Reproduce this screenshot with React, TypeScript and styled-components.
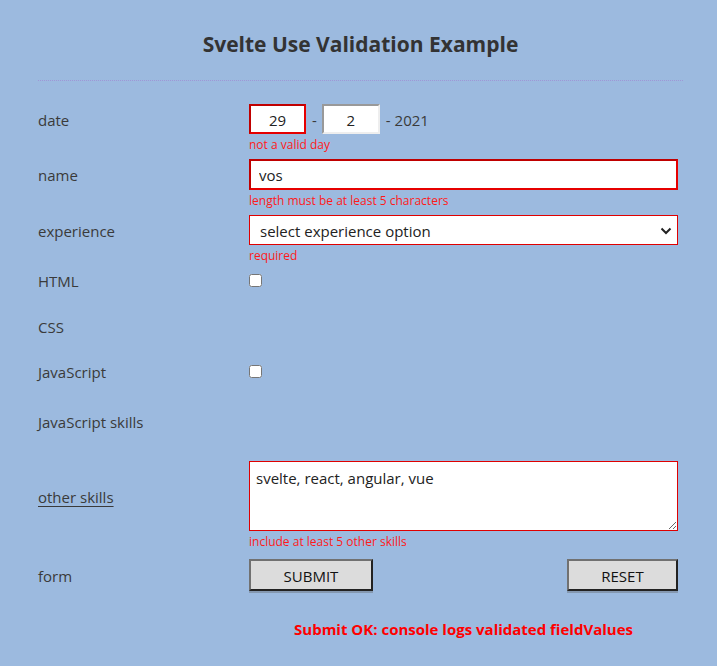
import React, { useState } from 'react';
import styled, { createGlobalStyle } from 'styled-components';

const GlobalStyle = createGlobalStyle`
  html, body {
    margin: 0;
    padding: 0;
    background: #9cbadf;
  }
  body {
    font-family: "Open Sans", "Noto Sans", sans-serif;
    color: #3a3a3a;
  }
`;

const Page = styled.div`
  width: 645px;
  padding: 0 0 20px 38px;
`;

const Title = styled.h1`
  margin: 0;
  padding-top: 30px;
  height: 28px;
  line-height: 28px;
  text-align: center;
  font-size: 21px;
  font-weight: 700;
  color: #333;
`;

const Divider = styled.hr`
  margin: 22px 0 0 0;
  border: none;
  border-top: 1px dotted #9f96d6;
  height: 0;
`;

const Form = styled.form`
  display: flex;
  flex-direction: column;
`;

const Field = styled.div<{ $mt: number; $h?: number }>`
  display: grid;
  grid-template-columns: 211px 429px;
  grid-template-rows: ${p => (p.$h ? `${p.$h}px` : 'auto')} auto;
  margin-top: ${p => p.$mt}px;
`;

const Label = styled.label<{ $underline?: boolean }>`
  grid-column: 1;
  grid-row: 1;
  align-self: center;
  padding-top: 1px;
  font-size: 15px;
  text-decoration: ${p => (p.$underline ? 'underline' : 'none')};
  text-underline-offset: 3px;
`;

const Control = styled.div`
  grid-column: 2;
  grid-row: 1;
  display: flex;
  align-items: center;
  position: relative;
`;

const ErrorText = styled.div`
  grid-column: 2;
  grid-row: 2;
  margin-top: 2px;
  height: 16px;
  line-height: 17px;
  font-size: 12px;
  color: #ff1a1a;
`;

const DateInput = styled.input<{ $invalid?: boolean }>`
  box-sizing: border-box;
  width: ${p => (p.$invalid ? 57 : 58)}px;
  height: 30px;
  padding: 1px 0 0;
  text-align: center;
  font-family: inherit;
  font-size: 15px;
  color: #222;
  background: #fff;
  border: 2px solid;
  border-color: ${p =>
    p.$invalid ? '#c00000 #e60000 #e60000 #c00000' : '#999 #eee #eee #999'};
  outline: none;
`;

const Dash = styled.span`
  font-size: 15px;
  padding-top: 2px;
  margin: 0 5px 0 6px;
`;

const TextInput = styled.input`
  box-sizing: border-box;
  width: 429px;
  height: 31px;
  padding: 1px 8px 0;
  font-family: inherit;
  font-size: 15px;
  color: #222;
  background: #fff;
  border: 2px solid;
  border-color: #c00000 #e60000 #e60000 #c00000;
  outline: none;
`;

const Select = styled.select`
  box-sizing: border-box;
  width: 429px;
  height: 30px;
  padding: 1px 30px 0 10px;
  font-family: inherit;
  font-size: 15px;
  color: #222;
  background: #fff;
  border: 1px solid #e00000;
  border-radius: 0;
  appearance: none;
  outline: none;
`;

const Chevron = styled.svg`
  position: absolute;
  right: 6px;
  top: 12px;
  pointer-events: none;
`;

const Checkbox = styled.input`
  margin: 0;
  width: 13px;
  height: 13px;
`;

const TextArea = styled.textarea`
  box-sizing: border-box;
  width: 429px;
  height: 70px;
  padding: 6px 6px;
  font-family: inherit;
  font-size: 15px;
  color: #222;
  background: #fff;
  border: 1px solid #e00000;
  outline: none;
  resize: vertical;
`;

const Buttons = styled.div`
  grid-column: 2;
  grid-row: 1;
  display: flex;
  justify-content: space-between;
`;

const Button = styled.button<{ $w: number }>`
  box-sizing: border-box;
  width: ${p => p.$w}px;
  height: 32px;
  padding: 1px 0 0;
  font-family: inherit;
  font-size: 15px;
  color: #111;
  background: #dcdcdc;
  border: 2px solid;
  border-color: #717171 #222 #222 #717171;
  box-shadow: 0 2px 0 rgba(90, 90, 90, 0.35);
  cursor: pointer;
`;

const Message = styled.div`
  margin-left: 211px;
  width: 429px;
  margin-top: 28px;
  line-height: 20px;
  text-align: center;
  font-size: 15px;
  font-weight: 700;
  color: #ff0000;
`;

export default function App() {
  const [day, setDay] = useState('29');
  const [month, setMonth] = useState('2');
  const [name, setName] = useState('vos');
  const [skills, setSkills] = useState('svelte, react, angular, vue');

  return (
    <Page>
      <GlobalStyle />
      <Title>Svelte Use Validation Example</Title>
      <Divider />
      <Form onSubmit={e => e.preventDefault()}>
        <Field $mt={23}>
          <Label>date</Label>
          <Control>
            <DateInput $invalid value={day} onChange={e => setDay(e.target.value)} />
            <Dash>-</Dash>
            <DateInput value={month} onChange={e => setMonth(e.target.value)} />
            <Dash>- 2021</Dash>
          </Control>
          <ErrorText>not a valid day</ErrorText>
        </Field>

        <Field $mt={7}>
          <Label>name</Label>
          <Control>
            <TextInput value={name} onChange={e => setName(e.target.value)} />
          </Control>
          <ErrorText>length must be at least 5 characters</ErrorText>
        </Field>

        <Field $mt={7}>
          <Label>experience</Label>
          <Control>
            <Select defaultValue="">
              <option value="">select experience option</option>
              <option value="junior">junior</option>
              <option value="medior">medior</option>
              <option value="senior">senior</option>
            </Select>
            <Chevron width="12" height="8" viewBox="0 0 12 8">
              <path d="M1.5 1.5 L6 6 L10.5 1.5" fill="none" stroke="#222" strokeWidth="2" />
            </Chevron>
          </Control>
          <ErrorText>required</ErrorText>
        </Field>

        <Field $mt={2} $h={30}>
          <Label>HTML</Label>
          <Control>
            <Checkbox type="checkbox" />
          </Control>
        </Field>

        <Field $mt={16} $h={30}>
          <Label>CSS</Label>
        </Field>

        <Field $mt={15} $h={30}>
          <Label>JavaScript</Label>
          <Control>
            <Checkbox type="checkbox" />
          </Control>
        </Field>

        <Field $mt={20} $h={30}>
          <Label>JavaScript skills</Label>
        </Field>

        <Field $mt={25}>
          <Label $underline>other skills</Label>
          <Control>
            <TextArea value={skills} onChange={e => setSkills(e.target.value)} />
          </Control>
          <ErrorText>include at least 5 other skills</ErrorText>
        </Field>

        <Field $mt={10}>
          <Label>form</Label>
          <Buttons>
            <Button $w={124} type="submit">SUBMIT</Button>
            <Button $w={111} type="reset">RESET</Button>
          </Buttons>
        </Field>
      </Form>
      <Message>Submit OK: console logs validated fieldValues</Message>
    </Page>
  );
}
